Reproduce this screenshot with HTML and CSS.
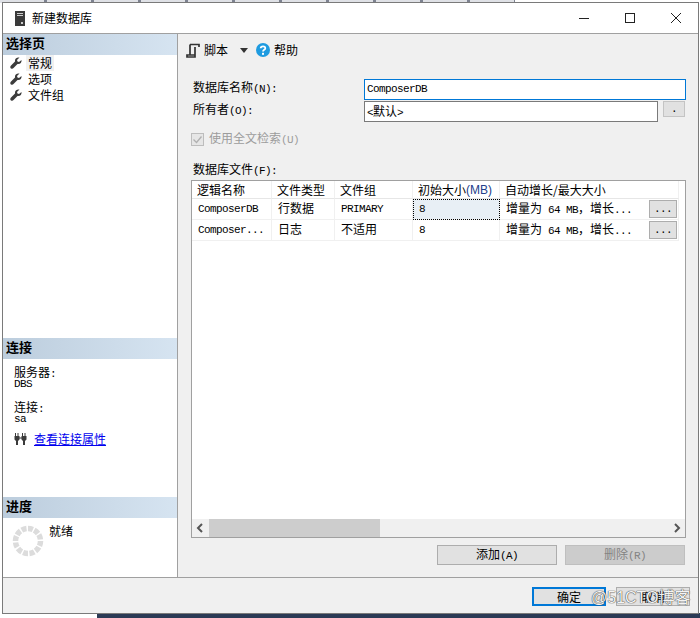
FILE: index.html
```html
<!DOCTYPE html>
<html lang="zh">
<head>
<meta charset="utf-8">
<title>新建数据库</title>
<link rel="stylesheet" href="styles.css">
</head>
<body>
<div class="desktop">
  <div class="desk-top"></div>
  <div class="desk-bottom"></div>
  <div class="window">
    <header class="titlebar">
      <svg class="app-icon" width="10" height="15" viewBox="0 0 10 15"><rect width="10" height="15" fill="#3a3a3a"/><rect x="2" y="2" width="6" height="1" fill="#ccc"/><rect x="2" y="4" width="6" height="1" fill="#ccc"/><rect x="6" y="11" width="2" height="2" fill="#ccc"/></svg>
      <span class="title">新建数据库</span>
      <div class="controls">
        <svg width="12" height="12" viewBox="0 0 12 12"><path d="M1 6.500H11" stroke="#222" stroke-width="1"/></svg>
        <svg width="12" height="12" viewBox="0 0 12 12"><rect x="1.500" y="1.500" width="9" height="9" fill="none" stroke="#222"/></svg>
        <svg width="12" height="12" viewBox="0 0 12 12"><path d="M1 1L11 11M11 1L1 11" stroke="#222" fill="none"/></svg>
      </div>
    </header>
    <div class="main">
      <aside class="side">
        <h2 class="side-head">选择页</h2>
        <ul class="pages">
          <li class="page"><svg class="wrench" width="12" height="12" viewBox="0 0 12 12"><path d="M11.500 3L9 5L7.500 4.500L7 3L9.500.5C7 0 4.500 1.500 5 4.500L.8 8.800C0 9.800.2 11 1 11.500C2 12 3 11.800 3.500 11L7.500 7C10 7.500 12 5.500 11.500 3Z" fill="#3c3c3c"/></svg><span class="page-name current">常规</span></li>
          <li class="page"><svg class="wrench" width="12" height="12" viewBox="0 0 12 12"><path d="M11.500 3L9 5L7.500 4.500L7 3L9.500.5C7 0 4.500 1.500 5 4.500L.8 8.800C0 9.800.2 11 1 11.500C2 12 3 11.800 3.500 11L7.500 7C10 7.500 12 5.500 11.500 3Z" fill="#3c3c3c"/></svg><span class="page-name">选项</span></li>
          <li class="page"><svg class="wrench" width="12" height="12" viewBox="0 0 12 12"><path d="M11.500 3L9 5L7.500 4.500L7 3L9.500.5C7 0 4.500 1.500 5 4.500L.8 8.800C0 9.800.2 11 1 11.500C2 12 3 11.800 3.500 11L7.500 7C10 7.500 12 5.500 11.500 3Z" fill="#3c3c3c"/></svg><span class="page-name">文件组</span></li>
        </ul>
        <h2 class="side-head">连接</h2>
        <div class="conn">
          <div class="conn-label">服务器<span class="m">:</span></div>
          <div class="conn-value m">DBS</div>
          <div class="conn-label gap">连接<span class="m">:</span></div>
          <div class="conn-value m">sa</div>
          <div class="conn-link">
            <svg width="14" height="12" viewBox="0 0 14 12"><path d="M1 0H2V3H3.500V0H4.500V3H5.500V6.500L4 8V12H2V8L.5 6.500V3H1ZM8 0H9V3H10.500V0H11.500V3H12.500V6.500L11 8V12H9V8L7.500 6.500V3H8ZM5.500 4.500H7.500V5.500H5.500Z" fill="#3a3a3a"/></svg>
            <a class="link" href="#">查看连接属性</a>
          </div>
        </div>
        <h2 class="side-head">进度</h2>
        <div class="progress">
          <svg class="spinner" width="32" height="32" viewBox="0 0 32 32"><circle cx="16" cy="16" r="12.500" fill="none" stroke="#dcdcdc" stroke-width="5.500" stroke-dasharray="5 1.500"/></svg>
          <span class="status">就绪</span>
        </div>
      </aside>
      <section class="content">
        <div class="toolbar">
          <svg class="tool-icon" width="14" height="15" viewBox="0 0 14 15"><path d="M4 1.500H13V4M4 1.500V12M4 12H1V14H9V12H4M9 12V4" fill="none" stroke="#333" stroke-width="1.700"/></svg>
          <span class="tool-text">脚本</span>
          <span class="caret"></span>
          <svg class="help-icon" width="14" height="14" viewBox="0 0 14 14"><circle cx="7" cy="7" r="7" fill="#1e9be0"/><path d="M4.700 5.300C4.800 2.800 9.300 2.800 9.300 5.200C9.300 6.800 7 6.800 7 8.500" fill="none" stroke="#fff" stroke-width="1.800"/><rect x="6" y="9.800" width="2" height="2" fill="#fff"/></svg>
          <span class="tool-text">帮助</span>
        </div>
        <div class="form-row first">
          <label class="form-label">数据库名称<span class="m">(N):</span></label>
          <div class="input focus m">ComposerDB</div>
        </div>
        <div class="form-row">
          <label class="form-label">所有者<span class="m">(O):</span></label>
          <div class="input owner"><span class="m">&lt;</span>默认<span class="m">&gt;</span></div>
          <button class="browse m" type="button">.</button>
        </div>
        <div class="fulltext">
          <svg width="13" height="13" viewBox="0 0 13 13"><rect x=".5" y=".5" width="12" height="12" fill="#e6e6e6" stroke="#bdbdbd"/><path d="M2.500 6.500L5.500 9.500L10.500 3.500" fill="none" stroke="#b0b0b0" stroke-width="1.300"/></svg>
          <span>使用全文检索<span class="m">(U)</span></span>
        </div>
        <div class="files-label">数据库文件<span class="m">(F):</span></div>
        <div class="grid-box">
          <div class="grid">
            <div class="cell head">逻辑名称</div>
            <div class="cell head">文件类型</div>
            <div class="cell head">文件组</div>
            <div class="cell head">初始大小<span class="s">(MB)</span></div>
            <div class="cell head">自动增长/最大大小</div>

            <div class="cell row m">ComposerDB</div>
            <div class="cell row cjk">行数据</div>
            <div class="cell row m">PRIMARY</div>
            <div class="cell row selected m">8</div>
            <div class="cell row grow"><span>增量为<span class="m"> 64 MB</span>，增长<span class="m">...</span></span><button class="more m" type="button">...</button></div>

            <div class="cell row m">Composer...</div>
            <div class="cell row cjk">日志</div>
            <div class="cell row cjk">不适用</div>
            <div class="cell row m">8</div>
            <div class="cell row grow"><span>增量为<span class="m"> 64 MB</span>，增长<span class="m">...</span></span><button class="more m" type="button">...</button></div>
          </div>
          <div class="hscroll">
            <svg class="arrow" width="17" height="18" viewBox="0 0 17 18"><path d="M10 5L6 9L10 13" fill="none" stroke="#555" stroke-width="2"/></svg>
            <div class="thumb"></div>
            <svg class="arrow right" width="17" height="18" viewBox="0 0 17 18"><path d="M7 5L11 9L7 13" fill="none" stroke="#555" stroke-width="2"/></svg>
          </div>
        </div>
        <div class="grid-actions">
          <button class="btn" type="button">添加<span class="m">(A)</span></button>
          <button class="btn off" type="button">删除<span class="m">(R)</span></button>
        </div>
      </section>
    </div>
    <footer class="footer">
      <button class="btn-foot default" type="button">确定</button>
      <button class="btn-foot" type="button">取消</button>
    </footer>
  </div>
  <div class="watermark">@51CTO博客</div>
</div>
</body>
</html>
```
FILE: styles.css
```css
* { box-sizing: border-box; }
html, body { margin: 0; padding: 0; }
body {
  font-family: "Noto Sans CJK SC", "Liberation Sans", sans-serif;
  font-size: 12px;
  line-height: 14px;
  color: #000;
  background: #fff;
}
.m { font-family: "Liberation Mono", "Noto Sans CJK SC", monospace; font-size: 11px; letter-spacing: -0.6px; }
.s { font-family: "Liberation Sans", sans-serif; font-size: 12px; color: #22408a; }
.desktop { position: relative; width: 700px; height: 618px; overflow: hidden; background: #fff; }
.desk-top {
  position: absolute; left: 0; top: 0; width: 515px; height: 3px;
  background: repeating-linear-gradient(90deg, #dfe1e6 0 44px, #7d8290 44px 47px);
}
.desk-bottom { position: absolute; left: 97px; top: 613px; width: 603px; height: 5px; background: #2b3a55; }
.window {
  position: absolute; left: 2px; top: 2px; width: 697px; height: 612px;
  border: 1px solid #7a7a7a; background: #f0f0f0;
  display: flex; flex-direction: column;
}
.titlebar { height: 30px; flex: none; background: #fff; display: flex; align-items: center; padding-left: 12px; }
.app-icon { flex: none; }
.title { margin-left: 7px; font-size: 12px; }
.controls { margin-left: auto; display: flex; gap: 34px; padding-right: 16px; }
.main { height: 545px; flex: none; display: flex; border-top: 1px solid #a0a0a0; border-bottom: 1px solid #a0a0a0; }
.side { width: 175px; flex: none; background: #fff; border-right: 1px solid #a0a0a0; display: flex; flex-direction: column; }
.side-head {
  margin: 0; height: 21px; flex: none; padding-left: 3px;
  font-size: 13px; line-height: 18px; font-weight: 700;
  background: linear-gradient(90deg, #bccddd, #d6e4f1);
}
.pages { list-style: none; margin: 0; padding: 0; height: 283px; flex: none; }
.page { height: 16px; display: flex; align-items: center; padding-left: 7px; }
.wrench { flex: none; }
.page-name { margin-left: 4px; padding: 1px 2px; height: 16px; line-height: 14px; }
.current { background: #f0f0f0; }
.conn { height: 138px; flex: none; padding: 6px 0 0 11px; }
.conn-label { height: 13px; line-height: 13px; }
.conn-value { height: 12px; line-height: 12px; }
.gap { margin-top: 10px; }
.conn-link { display: flex; align-items: center; margin-top: 6px; gap: 6px; height: 16px; }
.link { color: #0000ee; text-decoration: underline; }
.progress { flex: 1; display: flex; align-items: flex-start; padding: 7px 0 0 9px; }
.spinner { flex: none; }
.status { margin-left: 5px; margin-top: -1px; }
.content { flex: 1; min-width: 0; padding: 0 13px; display: flex; flex-direction: column; }
.toolbar { height: 32px; flex: none; display: flex; align-items: center; margin-left: -5px; }
.tool-icon { flex: none; margin-right: 4px; }
.tool-text { font-size: 12px; }
.caret { width: 0; height: 0; border: 4px solid transparent; border-top: 5px solid #333; border-bottom: 0; margin: 0 8px 0 12px; }
.help-icon { flex: none; margin-right: 4px; }
.form-row { display: flex; align-items: center; height: 22px; flex: none; }
.form-row.first { margin-top: 12px; }
.form-label { width: 173px; flex: none; padding: 0 0 2px 2px; }
.input { height: 21px; flex: none; background: #fff; border: 1px solid #7a7a7a; padding-left: 2px; line-height: 18px; }
.focus { width: 322px; border-color: #0078d7; }
.owner { width: 294px; }
.browse {
  margin: 1px 0 0 5px; width: 22px; height: 16px; padding: 0;
  background: #e1e1e1; border: 1px solid #c4c4c4; line-height: 12px; align-self: flex-start;
}
.fulltext { display: flex; align-items: center; gap: 5px; height: 14px; margin-top: 10px; color: #9c9c9c; flex: none; }
.files-label { margin: 16px 0 0 2px; height: 14px; flex: none; }
.grid-box { margin-top: 4px; height: 358px; width: 495px; flex: none; background: #fff; border: 1px solid #a0a0a0; display: flex; flex-direction: column; justify-content: space-between; }
.grid { display: grid; grid-template-columns: 80px 63px 78px 87px 179px; grid-template-rows: 18px 21px 21px; }
.cell { padding-left: 5px; border-right: 1px solid #f0f0f0; border-bottom: 1px solid #f0f0f0; display: flex; align-items: center; white-space: nowrap; }
.head { border-bottom-color: #e6e6e6; }
.row { padding-left: 6px; }
.cjk { padding-bottom: 2px; }
.selected { background: #e8eff5; outline: 1px dotted #000; outline-offset: -1px; }
.grow { justify-content: space-between; padding-right: 1px; }
.more { width: 28px; height: 18px; padding: 0; background: #e1e1e1; border: 1px solid #adadad; line-height: 14px; }
.hscroll { height: 18px; background: #f0f0f0; display: flex; align-items: center; }
.arrow { flex: none; }
.right { margin-left: auto; }
.thumb { width: 171px; height: 18px; background: #cdcdcd; }
.grid-actions { display: flex; justify-content: flex-end; gap: 8px; margin-top: 7px; width: 494px; }
.btn { width: 120px; height: 20px; padding: 0; background: #e1e1e1; border: 1px solid #adadad; font: inherit; line-height: 14px; color: #000; }
.off { background: #cccccc; border-color: #bfbfbf; color: #838383; }
.footer { flex: 1; display: flex; justify-content: flex-end; align-items: flex-start; gap: 10px; padding: 9px 8px 0 0; }
.btn-foot { width: 74px; height: 19px; padding: 0; background: #e1e1e1; border: 1px solid #adadad; font: inherit; line-height: 14px; color: #000; }
.default { border: 2px solid #0078d7; }
.watermark {
  position: absolute; left: 591px; top: 589px;
  font-family: "Liberation Sans", "Noto Sans CJK SC", sans-serif; font-size: 16px; line-height: 18px;
  color: #f4f4f4; text-shadow: 0 0 1px #333, 0 0 1px #333; white-space: nowrap;
}
```
